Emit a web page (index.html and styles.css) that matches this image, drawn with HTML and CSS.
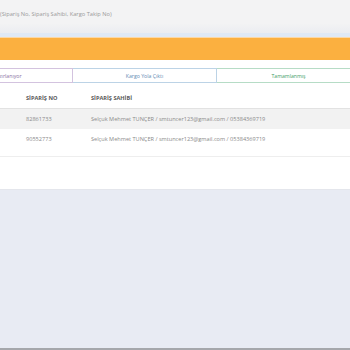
FILE: index.html
```html
<!doctype html>
<html lang="tr">
  <head>
    <meta charset="UTF-8" />
    <meta name="viewport" content="width=device-width, initial-scale=1.0" />
    <title>Siparişler</title>
    <link rel="stylesheet" href="styles.css">
  </head>
  <body>
    <div class="search">
      <span class="search-hint">(Sipariş No, Sipariş Sahibi, Kargo Takip No)</span>
    </div>
    <div class="banner"></div>
    <div class="panel">
      <div class="tabs">
        <div class="tab tab-prep">Hazırlanıyor</div>
        <div class="tab tab-ship">Kargo Yola Çıktı</div>
        <div class="tab tab-done">Tamamlanmış</div>
      </div>
      <div class="orders">
        <table>
          <thead>
            <tr>
              <th class="col-idx"></th>
              <th class="col-no">SİPARİŞ NO</th>
              <th>SİPARİŞ SAHİBİ</th>
            </tr>
          </thead>
          <tbody>
            <tr class="odd">
              <td class="col-idx"></td>
              <td class="col-no">82861733</td>
              <td>Selçuk Mehmet TUNÇER / smtuncer123@gmail.com / 05384369719</td>
            </tr>
            <tr>
              <td class="col-idx"></td>
              <td class="col-no">90552773</td>
              <td>Selçuk Mehmet TUNÇER / smtuncer123@gmail.com / 05384369719</td>
            </tr>
          </tbody>
        </table>
      </div>
    </div>
    <div class="footer"></div>
  </body>
</html>
```

FILE: styles.css
```css
html,
body {
  margin: 0;
  padding: 0;
  height: 100%;
  overflow: hidden;
}
body {
  background: #e8ebf3;
  font-family: "Open Sans", "Liberation Sans", sans-serif;
  display: flex;
  flex-direction: column;
}
.search {
  height: 37px;
  background: linear-gradient(#f3f3f4 70%, #ebedf1);
  border-bottom: 4px solid #dfe9f5;
  box-sizing: border-box;
  padding-top: 10px;
  font-size: 5.7px;
  line-height: 8px;
}
.search-hint {
  color: #9a9a9a;
}
.banner {
  height: 22px;
  background: #fbb040;
  border-top: 1px solid #fbd8a6;
}
.panel {
  background: #fff;
  padding-top: 8px;
  height: 121px;
  border-bottom: 1px solid #e4e6ec;
}
.tabs {
  display: flex;
  margin-left: -59px;
}
.tab {
  flex: 0 0 144px;
  height: 15px;
  box-sizing: border-box;
  display: flex;
  align-items: center;
  justify-content: center;
  font-size: 5.2px;
  border: 1px solid;
}
.tab-prep {
  flex-basis: 132px;
  border-color: #d3c3df;
  color: #8a6fa3;
}
.tab-ship {
  border-color: #bcd3e6;
  color: #5f8bb3;
  border-left: none;
}
.tab-done {
  border-color: #b6dcc6;
  color: #3f9d66;
  border-left: none;
}
.orders {
  margin-top: 5px;
  padding-bottom: 7px;
  border-bottom: 1px solid #eeeeee;
}
.orders table {
  width: 100%;
  border-collapse: collapse;
  font-size: 5.6px;
  color: #8a8a8a;
}
.orders th,
.orders td {
  height: 20px;
  padding: 0;
  text-align: left;
  white-space: nowrap;
}
.orders th {
  color: #5a5a5a;
  font-weight: 700;
  border-bottom: 1px solid #e2e2e2;
}
.orders tr.odd td {
  background: #f2f2f2;
}
.col-idx {
  width: 26px;
}
.col-no {
  width: 65px;
}
.footer {
  flex: 1;
  border-bottom: 2px solid #a5a7ab;
}
```
